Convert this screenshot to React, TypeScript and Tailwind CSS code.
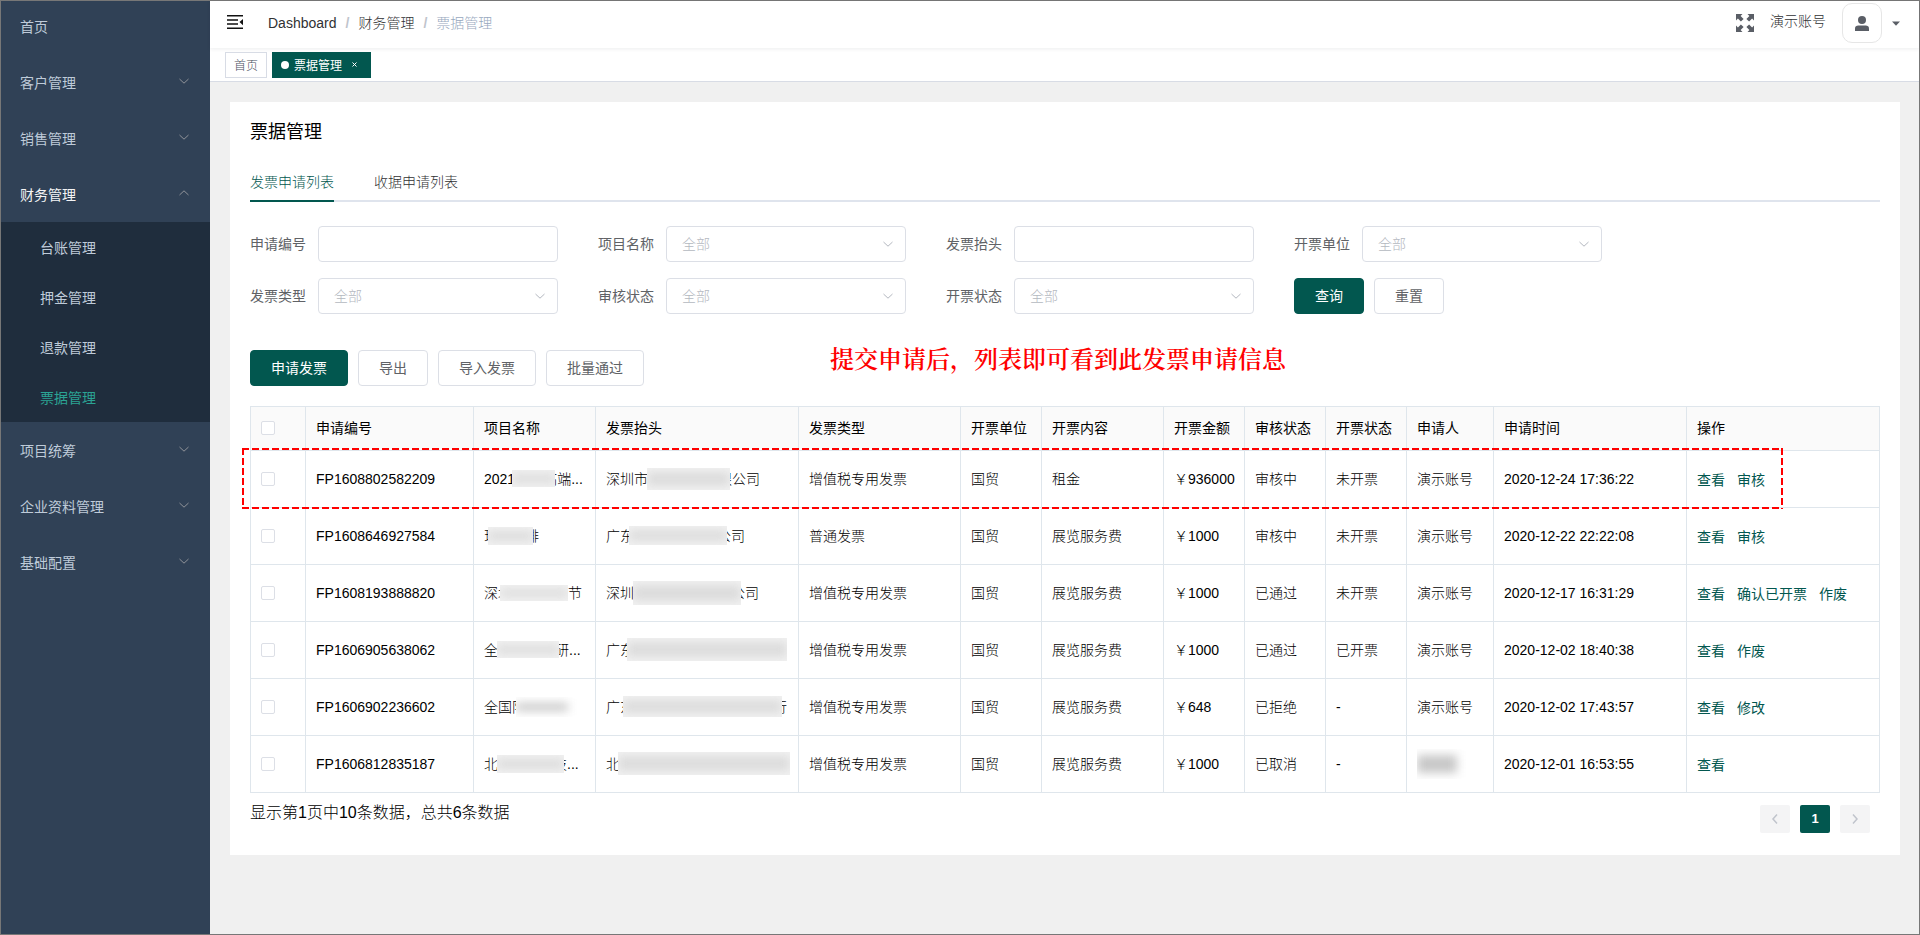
import { useState } from "react";
import clsx from "clsx";

type Masked = {
  before?: string;
  cover?: number;
  width: number;
  height: number;
  tuck?: number;
  after?: string;
  soft?: boolean;
};

type Row = {
  code: string;
  project: Masked;
  title: Masked;
  type: string;
  content: string;
  amount: string;
  audit: string;
  billing: string;
  user: string | Masked;
  time: string;
  actions: string[];
};

const menu = [
  { label: "客户管理" },
  { label: "销售管理" },
  { label: "财务管理", children: ["台账管理", "押金管理", "退款管理", "票据管理"] },
  { label: "项目统筹" },
  { label: "企业资料管理" },
  { label: "基础配置" },
];

const filters = [
  { id: "code", label: "申请编号", select: false },
  { id: "project", label: "项目名称", select: true },
  { id: "title", label: "发票抬头", select: false },
  { id: "unit", label: "开票单位", select: true },
  { id: "type", label: "发票类型", select: true },
  { id: "audit", label: "审核状态", select: true },
  { id: "billing", label: "开票状态", select: true },
];

const columns = [
  { title: "申请编号", width: 168 },
  { title: "项目名称", width: 122 },
  { title: "发票抬头", width: 203 },
  { title: "发票类型", width: 162 },
  { title: "开票单位", width: 81 },
  { title: "开票内容", width: 122 },
  { title: "开票金额", width: 81 },
  { title: "审核状态", width: 81 },
  { title: "开票状态", width: 81 },
  { title: "申请人", width: 87 },
  { title: "申请时间", width: 193 },
  { title: "操作", width: 193 },
];

const rows: Row[] = [
  {
    code: "FP1608802582209",
    project: { before: "2021", cover: 3, width: 43, height: 17, tuck: 12, after: "高端..." },
    title: { before: "深圳市", cover: 1, width: 83, height: 22, tuck: 12, after: "限公司" },
    type: "增值税专用发票",
    content: "租金",
    amount: "936000",
    audit: "审核中",
    billing: "未开票",
    user: "演示账号",
    time: "2020-12-24 17:36:22",
    actions: ["查看", "审核"],
  },
  {
    code: "FP1608646927584",
    project: { before: "现", cover: 10, width: 45, height: 18, tuck: 8, after: "排" },
    title: { before: "广东", cover: 5, width: 98, height: 19, tuck: 10, after: "公司" },
    type: "普通发票",
    content: "展览服务费",
    amount: "1000",
    audit: "审核中",
    billing: "未开票",
    user: "演示账号",
    time: "2020-12-22 22:22:08",
    actions: ["查看", "审核"],
  },
  {
    code: "FP1608193888820",
    project: { before: "深圳", cover: 12, width: 68, height: 16, after: "节" },
    title: { before: "深圳", cover: 1, width: 108, height: 24, tuck: 10, after: "公司" },
    type: "增值税专用发票",
    content: "展览服务费",
    amount: "1000",
    audit: "已通过",
    billing: "未开票",
    user: "演示账号",
    time: "2020-12-17 16:31:29",
    actions: ["查看", "确认已开票", "作废"],
  },
  {
    code: "FP1606905638062",
    project: { before: "全", cover: 1, width: 62, height: 17, tuck: 4, after: "研..." },
    title: { before: "广东", cover: 7, width: 160, height: 23 },
    type: "增值税专用发票",
    content: "展览服务费",
    amount: "1000",
    audit: "已通过",
    billing: "已开票",
    user: "演示账号",
    time: "2020-12-02 18:40:38",
    actions: ["查看", "作废"],
  },
  {
    code: "FP1606902236602",
    project: { before: "全国际", cover: 10, width: 64, height: 20, soft: true },
    title: { before: "广东", cover: 11, width: 159, height: 21, tuck: 9, after: "行" },
    type: "增值税专用发票",
    content: "展览服务费",
    amount: "648",
    audit: "已拒绝",
    billing: "-",
    user: "演示账号",
    time: "2020-12-02 17:43:57",
    actions: ["查看", "修改"],
  },
  {
    code: "FP1606812835187",
    project: { before: "北", cover: 1, width: 67, height: 18, tuck: 11, after: "技..." },
    title: { before: "北", cover: 2, width: 172, height: 23 },
    type: "增值税专用发票",
    content: "展览服务费",
    amount: "1000",
    audit: "已取消",
    billing: "-",
    user: { width: 52, height: 30, soft: true },
    time: "2020-12-01 16:53:55",
    actions: ["查看"],
  },
];

function Chevron({ className, up }: { className?: string; up?: boolean }) {
  return (
    <svg className={className} width="12" height="12" viewBox="0 0 12 12" fill="none" stroke="currentColor">
      <path d={up ? "M1.5 8L6 3.8L10.5 8" : "M1.5 4L6 8.2L10.5 4"} />
    </svg>
  );
}

// 打码文字
function MaskedText({ value }: { value: Masked }) {
  const { before, cover = 0, width, height, tuck = 0, after, soft } = value;
  return (
    <div className="flex items-center whitespace-nowrap">
      {before}
      <span
        className={clsx("relative shrink-0 overflow-hidden", soft ? "bg-white" : "bg-[#f2f2f2]")}
        style={{ width, height, marginLeft: -cover, marginRight: -tuck }}
      >
        <span
          className={clsx(
            "absolute left-0 blur-[5px]",
            soft ? "inset-y-1.5 right-3 bg-[#c8c8c8]" : "inset-y-1 right-0 bg-[#dcdcdc]"
          )}
        />
      </span>
      {after}
    </div>
  );
}

function Sidebar() {
  return (
    <aside className="w-[209px] shrink-0 bg-[#304156] text-sm text-[#bfcbd9]">
      <nav>
        <a href="#" className="flex h-[53px] items-center px-[19px] pb-0.5">首页</a>
        {menu.map((item) => (
          <div key={item.label}>
            <button
              type="button"
              className={clsx(
                "flex h-14 w-full items-center justify-between pt-0.5 pr-5 pl-[19px]",
                item.children && "text-[#f4f4f5]"
              )}
            >
              {item.label}
              <Chevron up={!!item.children} className="mb-1 text-[#909399]" />
            </button>
            {item.children && (
              <div className="bg-[#1f2d3d]">
                {item.children.map((child) => (
                  <a
                    key={child}
                    href="#"
                    className={clsx(
                      "flex h-[50px] items-center px-[39px] pt-0.5",
                      child === "票据管理" && "text-[#2ba394]"
                    )}
                  >
                    {child}
                  </a>
                ))}
              </div>
            )}
          </div>
        ))}
      </nav>
    </aside>
  );
}

function Navbar() {
  return (
    <header className="relative flex h-[47px] items-center bg-white pr-[19px] pb-[3px] pl-[17px] text-sm shadow-[0_1px_4px_rgba(0,21,41,0.08)]">
      <button type="button" aria-label="收起菜单" className="mb-0.5">
        <svg width="16" height="14" viewBox="0 0 16 14" fill="#111">
          <path d="M0 0h16v1.500H0zM0 4.200h11v1.500H0zM0 8.300h11v1.500H0zM0 12.500h16v1.500H0zM16 4v6.200L12.500 7.100z" />
        </svg>
      </button>
      <nav className="ml-[25px] flex items-center gap-[9px] leading-5">
        <a href="#" className="text-[#303133]">Dashboard</a>
        <span className="font-bold text-[#c0c4cc]">/</span>
        <a href="#" className="font-light text-[#303133]">财务管理</a>
        <span className="font-bold text-[#c0c4cc]">/</span>
        <span className="font-light text-[#97a8be]">票据管理</span>
      </nav>
      <div className="ml-auto flex items-center">
        <button type="button" aria-label="全屏">
          <svg width="18" height="18" viewBox="0 0 18 18" fill="#5a5e66">
            <path d="M0 0h6.5L4.6 1.9 7.6 4.9 4.9 7.6 1.9 4.6 0 6.5z" />
            <path d="M18 0v6.5L16.1 4.6 13.1 7.6 10.4 4.9 13.4 1.9 11.5 0z" />
            <path d="M0 18v-6.5L1.9 13.4 4.9 10.4 7.6 13.1 4.6 16.1 6.5 18z" />
            <path d="M18 18h-6.5L13.4 16.1 10.4 13.1 13.1 10.4 16.1 13.4 18 11.5z" />
          </svg>
        </button>
        <span className="mr-4 mb-1 ml-4 font-light text-[#303133]">演示账号</span>
        <button type="button" aria-label="个人中心" className="flex items-center gap-[10px] text-[#5a5e66]">
          <span className="flex size-10 items-center justify-center rounded-[10px] border border-[#e6e6e6]">
            <svg width="14" height="15" viewBox="0 0 14 15" fill="currentColor">
              <circle cx="7" cy="4" r="4" />
              <path d="M0 15v-2.5C0 10.500 1.500 9.600 3.200 9.600h7.600c1.700 0 3.200.9 3.200 2.900V15z" />
            </svg>
          </span>
          <svg width="8" height="5" viewBox="0 0 8 5" fill="currentColor">
            <path d="M0 0.500h8L4 4.800z" />
          </svg>
        </button>
      </div>
    </header>
  );
}

function TagsView() {
  return (
    <div className="flex h-[34px] items-center gap-[5px] border-b border-[#d8dce5] bg-white pl-[15px] text-xs">
      <a href="#" className="flex h-[26px] items-center border border-[#d8dce5] px-2 pt-0.5 font-light text-[#495060]">首页</a>
      <div className="flex h-[26px] items-center bg-[#02574f] px-[9px] text-white">
        <span className="mr-[5px] size-2 rounded-full bg-white" />
        <span className="pt-0.5">票据管理</span>
        <button type="button" aria-label="关闭" className="ml-1 flex size-4 items-center justify-center">
          <svg width="5" height="5" viewBox="0 0 5 5" stroke="currentColor">
            <path d="M0.500 0.500l4 4M4.500 0.500l-4 4" />
          </svg>
        </button>
      </div>
    </div>
  );
}

const btn = "h-9 rounded-[4px] border px-5 text-sm";
const plain = "border-[#dcdfe6] bg-white text-[#606266]";
const primary = "border-[#02574f] bg-[#02574f] text-white";

function Filters() {
  return (
    <form className="mt-6 flex flex-wrap gap-x-10 gap-y-4 text-sm">
      {filters.map((f) => (
        <div key={f.id} className="flex items-center gap-3">
          <label htmlFor={f.id} className="w-14 text-[#606266]">{f.label}</label>
          {f.select ? (
            <div className="relative">
              <select
                id={f.id}
                className="h-9 w-60 appearance-none rounded-[4px] border border-[#dcdfe6] bg-white pl-[15px] font-light text-[#b4b8c0]"
              >
                <option>全部</option>
              </select>
              <Chevron className="pointer-events-none absolute top-3 right-3 text-[#b4b8c0]" />
            </div>
          ) : (
            <input id={f.id} type="text" className="h-9 w-60 rounded-[4px] border border-[#dcdfe6] bg-white px-[15px]" />
          )}
        </div>
      ))}
      <div className="flex gap-[10px]">
        <button type="button" className={clsx(btn, primary)}>查询</button>
        <button type="button" className={clsx(btn, plain)}>重置</button>
      </div>
    </form>
  );
}

function Checkbox({ label }: { label: string }) {
  return (
    <input
      type="checkbox"
      aria-label={label}
      className="block size-[14px] appearance-none rounded-[2px] border border-[#dcdfe6] bg-white checked:bg-[#02574f]"
    />
  );
}

function InvoiceTable() {
  const cell = "border-r border-b border-[#dfe6ec] px-[10px] pb-px";
  return (
    <div className="relative mt-5">
      <table className="w-full table-fixed border-separate border-spacing-0 border-t border-l border-[#dfe6ec] text-sm text-black">
        <colgroup>
          <col style={{ width: 55 }} />
          {columns.map((c) => (
            <col key={c.title} style={{ width: c.width }} />
          ))}
        </colgroup>
        <thead>
          <tr className="h-11 bg-[#fafafa] text-left">
            <th className={cell}><Checkbox label="全选" /></th>
            {columns.map((c) => (
              <th key={c.title} className={clsx(cell, "font-normal whitespace-nowrap")}>{c.title}</th>
            ))}
          </tr>
        </thead>
        <tbody className="font-light whitespace-nowrap">
          {rows.map((r) => (
            <tr key={r.code} className="h-[57px]">
              <td className={cell}><Checkbox label={r.code} /></td>
              <td className={cell}>{r.code}</td>
              <td className={cell}><MaskedText value={r.project} /></td>
              <td className={cell}><MaskedText value={r.title} /></td>
              <td className={cell}>{r.type}</td>
              <td className={cell}>国贸</td>
              <td className={cell}>{r.content}</td>
              <td className={cell}>￥{r.amount}</td>
              <td className={cell}>{r.audit}</td>
              <td className={cell}>{r.billing}</td>
              <td className={cell}>{typeof r.user === "string" ? r.user : <MaskedText value={r.user} />}</td>
              <td className={cell}>{r.time}</td>
              <td className={cell}>
                <div className="flex gap-3 pt-0.5 font-normal text-[#02574f]">
                  {r.actions.map((a) => (
                    <button key={a} type="button">{a}</button>
                  ))}
                </div>
              </td>
            </tr>
          ))}
        </tbody>
      </table>
      {/* 红色虚线标注框 */}
      <div className="pointer-events-none absolute top-[42px] right-[98px] -left-2 h-[61px]">
        <svg className="block size-full overflow-visible" fill="none" stroke="#ff0000" strokeWidth="2" strokeDasharray="7 3">
          <line x1="0" y1="1" x2="100%" y2="1" />
          <line x1="0" y1="60" x2="100%" y2="60" />
          <line x1="1" y1="0" x2="1" y2="100%" />
          <line x1="100%" y1="0" x2="100%" y2="100%" />
        </svg>
      </div>
    </div>
  );
}

export default function App() {
  const [tab, setTab] = useState("发票申请列表");

  return (
    <div className="flex min-h-screen border border-[#777777] bg-[#f0f0f0] font-['Liberation_Sans','Noto_Sans_CJK_SC',sans-serif]">
      <Sidebar />
      <div className="min-w-0 flex-1">
        <Navbar />
        <TagsView />
        <main className="pt-5 pr-[19px] pl-5">
          <section className="bg-white px-5 pt-5 pb-[22px]">
            <h1 className="text-lg leading-5 text-black">票据管理</h1>
            <div role="tablist" className="mt-5 flex h-10 gap-10 border-b-2 border-[#dfe4ed] text-sm font-light">
              {["发票申请列表", "收据申请列表"].map((t) => (
                <button
                  key={t}
                  type="button"
                  role="tab"
                  aria-selected={t === tab}
                  onClick={() => setTab(t)}
                  className={clsx(
                    "h-10 border-b-2 pt-0.5",
                    t === tab ? "border-[#02574f] text-[#02574f]" : "border-transparent text-[#303133]"
                  )}
                >
                  {t}
                </button>
              ))}
            </div>
            <Filters />
            <div className="relative mt-9 flex gap-[10px]">
              <button type="button" className={clsx(btn, primary)}>申请发票</button>
              <button type="button" className={clsx(btn, plain)}>导出</button>
              <button type="button" className={clsx(btn, plain)}>导入发票</button>
              <button type="button" className={clsx(btn, plain)}>批量通过</button>
              <p className="absolute -top-2 left-[580px] font-['Noto_Serif_CJK_SC','Noto_Sans_CJK_SC',serif] text-2xl font-semibold whitespace-nowrap text-[#ff0000]">
                提交申请后，列表即可看到此发票申请信息
              </p>
            </div>
            <InvoiceTable />
            <div className="flex justify-between pr-[10px]">
              <p className="mt-2 leading-6 font-light text-black">显示第1页中10条数据，总共6条数据</p>
              <div className="mt-3 flex gap-[10px]">
                <button type="button" aria-label="上一页" disabled className="flex h-7 w-[30px] items-center justify-center rounded-[2px] bg-[#f4f4f5] text-[#c0c4cc]">
                  <svg width="8" height="12" viewBox="0 0 8 12" fill="none" stroke="currentColor" strokeWidth="1.500"><path d="M6 1.500L2 6l4 4.500" /></svg>
                </button>
                <button type="button" className="h-7 w-[30px] rounded-[2px] bg-[#02574f] text-[13px] font-bold text-white">1</button>
                <button type="button" aria-label="下一页" disabled className="flex h-7 w-[30px] items-center justify-center rounded-[2px] bg-[#f4f4f5] text-[#c0c4cc]">
                  <svg width="8" height="12" viewBox="0 0 8 12" fill="none" stroke="currentColor" strokeWidth="1.500"><path d="M2 1.500L6 6l-4 4.500" /></svg>
                </button>
              </div>
            </div>
          </section>
        </main>
      </div>
    </div>
  );
}
